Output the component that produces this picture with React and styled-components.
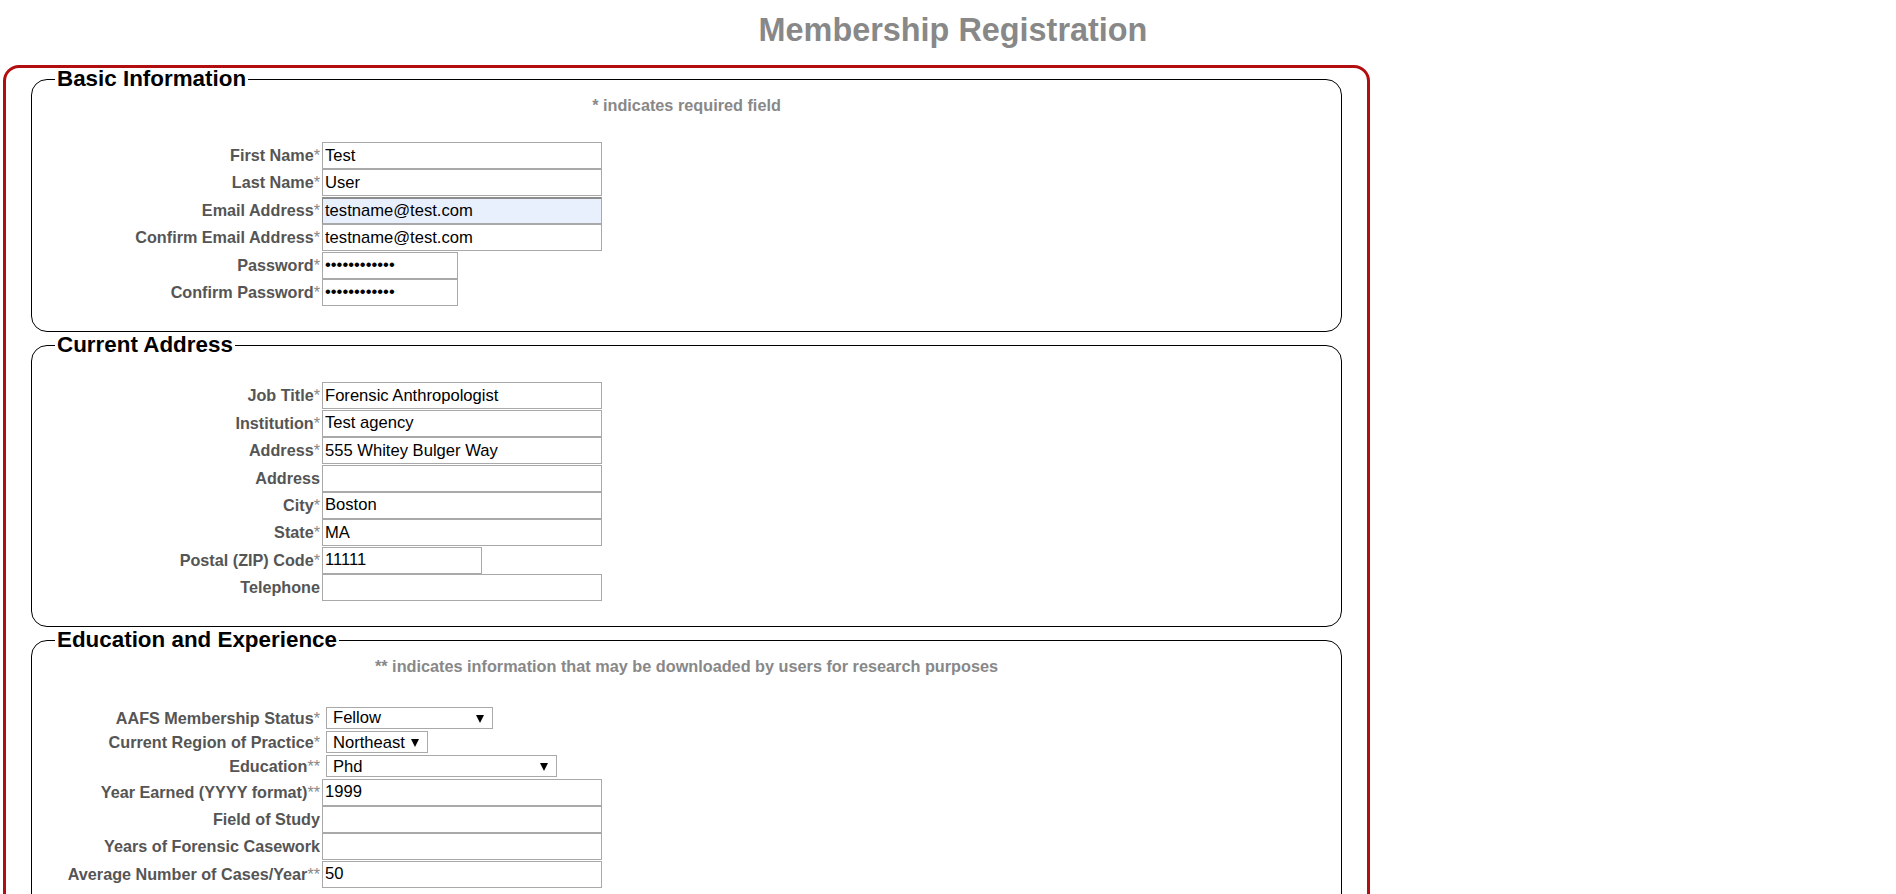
import React from "react";
import styled, { createGlobalStyle } from "styled-components";

const GlobalStyle = createGlobalStyle`
  html, body {
    margin: 0;
    padding: 0;
    background: #fff;
    overflow: hidden;
  }
  body {
    font-family: "Liberation Sans", Arial, Helvetica, sans-serif;
  }
`;

const Page = styled.div`
  width: 1896px;
  height: 894px;
  overflow: hidden;
`;

const Title = styled.h1`
  margin: 0 0 16px;
  padding: 12px 0 0 10px;
  text-align: center;
  font-size: 32.4px;
  line-height: 37px;
  font-weight: bold;
  color: #888;
`;

const Frame = styled.div`
  box-sizing: border-box;
  width: 1367px;
  margin-left: 3px;
  border: 3px solid #b20e10;
  border-radius: 16px;
  padding: 0 25px 20px;
`;

const Section = styled.fieldset`
  margin: 0 0 2px;
  padding: 0 23px 25px;
  border: 1px solid #000;
  border-radius: 16px;
  min-width: 0;
`;

const Legend = styled.legend`
  padding: 0 2px;
  font-size: 22.4px;
  line-height: 22px;
  font-weight: bold;
  color: #000;
`;

const Note = styled.p`
  margin: ${(p) => p.$top}px 0 ${(p) => p.$bottom}px;
  text-align: center;
  font-size: 16.25px;
  line-height: 18px;
  font-weight: bold;
  color: #888;
`;

const Rows = styled.div`
  display: flex;
  flex-direction: column;
  padding-top: ${(p) => p.$top || 0}px;
`;

const Row = styled.div`
  display: flex;
  align-items: ${(p) => (p.$select ? "center" : "flex-start")};
  gap: 2px;
  height: ${(p) => (p.$select ? 24.4 : 27.4)}px;
`;

const Label = styled.label`
  width: 265px;
  flex: none;
  text-align: right;
  font-size: 16.2px;
  line-height: 27px;
  font-weight: bold;
  color: #555;
  white-space: nowrap;
  ${(p) => p.$select && "line-height: 22px;"}
`;

const Req = styled.span`
  font-weight: normal;
  color: #888;
`;

const TextInput = styled.input`
  box-sizing: border-box;
  width: ${(p) => p.$w}px;
  height: 27px;
  margin: 0;
  padding: 0 2px;
  border: 1px solid #a9a9a9;
  border-radius: 0;
  background: ${(p) => (p.$autofill ? "#e8f0fe" : "#fff")};
  ${(p) =>
    p.$autofill &&
    "border-top: 2px solid #8c8c8c; border-left-color: #8c8c8c;"}
  font-family: "Liberation Sans", Arial, sans-serif;
  font-size: 16.6px;
  color: #000;
  outline: none;
`;

const SelectWrap = styled.div`
  position: relative;
  margin-left: 4px;
  width: ${(p) => p.$w}px;
  height: 22px;
`;

const Select = styled.select`
  box-sizing: border-box;
  appearance: none;
  width: 100%;
  height: 22px;
  margin: 0;
  padding: 0 20px 0 6px;
  border: 1px solid #a9a9a9;
  border-radius: 0;
  background: #fff;
  font-family: "Liberation Sans", Arial, sans-serif;
  font-size: 16.6px;
  color: #000;
  outline: none;
`;

const Arrow = styled.span`
  position: absolute;
  right: 9px;
  top: 8px;
  width: 0;
  height: 0;
  border-left: 4px solid transparent;
  border-right: 4px solid transparent;
  border-top: 8px solid #000;
  pointer-events: none;
`;

const basic = [
  { label: "First Name", req: "*", value: "Test", w: 280 },
  { label: "Last Name", req: "*", value: "User", w: 280 },
  { label: "Email Address", req: "*", value: "testname@test.com", w: 280, autofill: true },
  { label: "Confirm Email Address", req: "*", value: "testname@test.com", w: 280 },
  { label: "Password", req: "*", value: "testpassword", w: 136, type: "password" },
  { label: "Confirm Password", req: "*", value: "testpassword", w: 136, type: "password" },
];

const address = [
  { label: "Job Title", req: "*", value: "Forensic Anthropologist", w: 280 },
  { label: "Institution", req: "*", value: "Test agency", w: 280 },
  { label: "Address", req: "*", value: "555 Whitey Bulger Way", w: 280 },
  { label: "Address", req: "", value: "", w: 280 },
  { label: "City", req: "*", value: "Boston", w: 280 },
  { label: "State", req: "*", value: "MA", w: 280 },
  { label: "Postal (ZIP) Code", req: "*", value: "11111", w: 160 },
  { label: "Telephone", req: "", value: "", w: 280 },
];

const selects = [
  { label: "AAFS Membership Status", req: "*", value: "Fellow", w: 167, options: ["Fellow", "Member", "Associate Member", "Student Affiliate"] },
  { label: "Current Region of Practice", req: "*", value: "Northeast", w: 102, options: ["Northeast", "Southeast", "Midwest", "West"] },
  { label: "Education", req: "**", value: "Phd", w: 231, options: ["Phd", "Masters", "Bachelors"] },
];

const education = [
  { label: "Year Earned (YYYY format)", req: "**", value: "1999", w: 280 },
  { label: "Field of Study", req: "", value: "", w: 280 },
  { label: "Years of Forensic Casework", req: "", value: "", w: 280 },
  { label: "Average Number of Cases/Year", req: "**", value: "50", w: 280 },
];

function InputRow({ f }) {
  return (
    <Row>
      <Label>
        {f.label}
        {f.req && <Req>{f.req}</Req>}
      </Label>
      <TextInput
        type={f.type || "text"}
        defaultValue={f.value}
        $w={f.w}
        $autofill={f.autofill}
      />
    </Row>
  );
}

function SelectRow({ f }) {
  return (
    <Row $select>
      <Label $select>
        {f.label}
        <Req>{f.req}</Req>
      </Label>
      <SelectWrap $w={f.w}>
        <Select defaultValue={f.value}>
          {f.options.map((o) => (
            <option key={o}>{o}</option>
          ))}
        </Select>
        <Arrow />
      </SelectWrap>
    </Row>
  );
}

export default function App() {
  return (
    <Page>
      <GlobalStyle />
      <Title>Membership Registration</Title>
      <Frame>
        <Section>
          <Legend>Basic Information</Legend>
          <Note $top={6} $bottom={28}>* indicates required field</Note>
          <Rows>
            {basic.map((f, i) => (
              <InputRow key={i} f={f} />
            ))}
          </Rows>
        </Section>

        <Section>
          <Legend>Current Address</Legend>
          <Rows $top={26}>
            {address.map((f, i) => (
              <InputRow key={i} f={f} />
            ))}
          </Rows>
        </Section>

        <Section>
          <Legend>Education and Experience</Legend>
          <Note $top={6} $bottom={30}>
            ** indicates information that may be downloaded by users for research purposes
          </Note>
          <Rows>
            {selects.map((f, i) => (
              <SelectRow key={i} f={f} />
            ))}
            {education.map((f, i) => (
              <InputRow key={i} f={f} />
            ))}
          </Rows>
        </Section>
      </Frame>
    </Page>
  );
}
